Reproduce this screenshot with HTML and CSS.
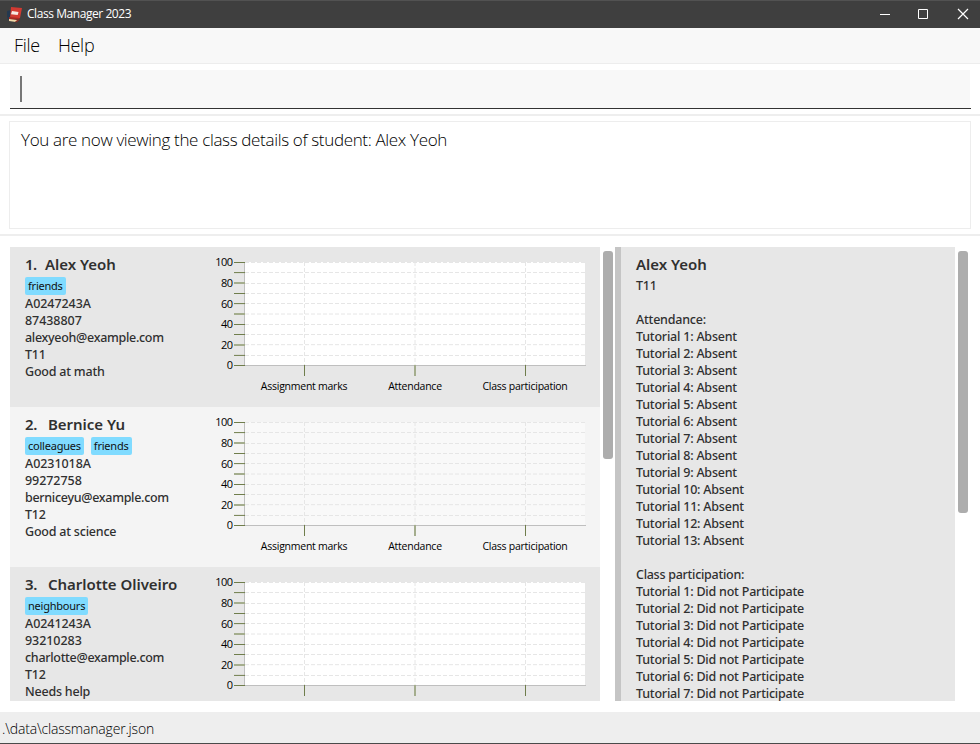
FILE: index.html
```
<!DOCTYPE html>
<html lang="en">
<head>
<meta charset="utf-8">
<title>Class Manager 2023</title>
<link rel="stylesheet" href="styles.css">
</head>
<body>
<svg class="defs" width="0" height="0" aria-hidden="true">
  <symbol id="plot" viewBox="0 0 390 160">
    <g class="grid">
      <path d="M35 15.5H375M35 25.5H375M35 36.5H375M35 46.5H375M35 56.5H375M35 67H375M35 77.5H375M35 87.5H375M35 97.7H375M35 108.5H375"/>
      <path d="M94.5 15V118M205 15V118M315.5 15V118"/>
    </g>
    <path class="axis" d="M34.5 15V118.5H376"/>
    <path class="tick" d="M24 15.5H35M24 46.5H35M24 87.5H35M24 118.5H35M94.5 118V129M315.5 118V129M24 25.6H35M24 56.6H35M24 77.5H35M24 108.4H35"/>
    <path class="tick soft" d="M24 36H35M24 67H35M24 98H35M205 118V129"/>
  </symbol>
</svg>
<div class="window">
  <header class="titlebar">
    <svg class="app-icon" width="16" height="16" viewBox="0 0 16 16">
      <path fill="#24384f" d="M0 4l4-1 1 8-4 2-1-4z"/>
      <path fill="#d23a32" d="M4 0l11 1-2 10-10 0z"/>
      <path fill="#f7e9e4" d="M5 4l6.500 1-.8 3-6.700-.8z"/>
      <path fill="#a92822" d="M2 10l11 1-1 1.500-10 .2z"/>
      <path fill="#f2d9a8" d="M2 12l9.500 1.200L9 15l-7-1z"/>
      <path fill="#8a2a22" d="M8 14.600l4-2.600 1 .6-3.500 3z"/>
    </svg>
    <span class="app-title">Class Manager 2023</span>
    <svg class="controls" width="100" height="28" viewBox="0 0 100 28" fill="none" stroke="#fff">
      <path d="M0 14.500H10M38.500 9.500h9v9h-9z"/>
      <path stroke-width="1.200" d="M78 9l10 10M88 9l-10 10"/>
    </svg>
  </header>
  <nav class="menu"><span>File</span><span class="help">Help</span></nav>
  <section class="command"><div class="field"><i class="caret"></i></div></section>
  <section class="result"><div class="message">You are now viewing the class details of student: Alex Yeoh</div></section>
  <main class="content">
    <div class="students">
      <article class="card">
        <div class="info">
          <h2><span class="no first">1.</span>Alex Yeoh</h2>
          <div class="tags"><span>friends</span></div>
          <p class="num">A0247243A</p><p class="num">87438807</p><p class="mail">alexyeoh@example.com</p><p>T11</p><p>Good at math</p>
        </div>
        <svg class="chart" width="390" height="160"><use href="#plot"/>
          <g class="y"><text x="22.500" y="19">100</text><text x="22.500" y="40">80</text><text x="22.500" y="61">60</text><text x="22.500" y="81">40</text><text x="22.500" y="102">20</text><text x="22.500" y="122">0</text></g>
          <g class="x"><text x="94" y="143">Assignment marks</text><text x="205" y="143">Attendance</text><text x="315" y="143">Class participation</text></g>
        </svg>
      </article>
      <article class="card alt">
        <div class="info">
          <h2><span class="no">2.</span>Bernice Yu</h2>
          <div class="tags"><span>colleagues</span><span>friends</span></div>
          <p class="num">A0231018A</p><p class="num">99272758</p><p class="mail">berniceyu@example.com</p><p>T12</p><p>Good at science</p>
        </div>
        <svg class="chart" width="390" height="160"><use href="#plot"/>
          <g class="y"><text x="22.500" y="19">100</text><text x="22.500" y="40">80</text><text x="22.500" y="61">60</text><text x="22.500" y="81">40</text><text x="22.500" y="102">20</text><text x="22.500" y="122">0</text></g>
          <g class="x"><text x="94" y="143">Assignment marks</text><text x="205" y="143">Attendance</text><text x="315" y="143">Class participation</text></g>
        </svg>
      </article>
      <article class="card">
        <div class="info">
          <h2><span class="no">3.</span>Charlotte Oliveiro</h2>
          <div class="tags"><span>neighbours</span></div>
          <p class="num">A0241243A</p><p class="num">93210283</p><p class="mail">charlotte@example.com</p><p>T12</p><p>Needs help</p>
        </div>
        <svg class="chart" width="390" height="134"><use href="#plot" width="390" height="160"/>
          <g class="y"><text x="22.500" y="19">100</text><text x="22.500" y="40">80</text><text x="22.500" y="61">60</text><text x="22.500" y="81">40</text><text x="22.500" y="102">20</text><text x="22.500" y="122">0</text></g>
        </svg>
      </article>
    </div>
    <div class="bar"><i class="thumb"></i></div>
    <aside class="details">
      <h2>Alex Yeoh</h2>
      <p class="class-id">T11</p>
      <p>Attendance:</p>
      <p>Tutorial 1: Absent</p><p>Tutorial 2: Absent</p><p>Tutorial 3: Absent</p><p>Tutorial 4: Absent</p><p>Tutorial 5: Absent</p><p>Tutorial 6: Absent</p><p>Tutorial 7: Absent</p><p>Tutorial 8: Absent</p><p>Tutorial 9: Absent</p><p>Tutorial 10: Absent</p><p>Tutorial 11: Absent</p><p>Tutorial 12: Absent</p><p class="last">Tutorial 13: Absent</p>
      <p class="heading">Class participation:</p>
      <p>Tutorial 1: Did not Participate</p><p>Tutorial 2: Did not Participate</p><p>Tutorial 3: Did not Participate</p><p>Tutorial 4: Did not Participate</p><p>Tutorial 5: Did not Participate</p><p>Tutorial 6: Did not Participate</p><p>Tutorial 7: Did not Participate</p>
    </aside>
    <div class="bar"><i class="thumb long"></i></div>
  </main>
  <footer class="status">.\data\classmanager.json</footer>
</div>
</body>
</html>
```
FILE: styles.css
```
* { box-sizing: border-box; margin: 0; padding: 0; }
body { font-family: "Noto Sans", "Open Sans", sans-serif; background: #fff; overflow: hidden; }
.defs { position: absolute; }
.window { width: 980px; height: 744px; display: flex; flex-direction: column; }

.titlebar { height: 28px; flex: none; display: flex; align-items: center; background: #3f3f3f; border-top: 1px solid #525252; padding-left: 7px; color: #fff; }
.app-icon { margin-right: 4px; }
.app-title { font: 400 12px/24px "Open Sans", sans-serif; letter-spacing: -0.44px; margin-top: -2px; }
.controls { margin-left: auto; margin-top: -1px; }

.menu { height: 36px; flex: none; background: #f8f8f8; border-bottom: 1px solid #ededed; padding-left: 14px; font: 300 18px/35px "Open Sans", sans-serif; letter-spacing: -0.3px; color: #000; display: flex; }
.help { margin-left: 18px; }

.command { height: 52px; flex: none; padding: 6px 9px 5px 10px; border-bottom: 2px solid #eee; }
.field { height: 39px; background: linear-gradient(#f8f8f8, #f8f8f8) 0 0 / 960px 38px no-repeat; border-bottom: 1px solid #333; padding: 6px 10px; display: flex; }
.caret { width: 2px; height: 26px; background: #777; }

.result { height: 120px; flex: none; padding: 5px 9px; border-bottom: 2px solid #eee; }
.message { height: 108px; border: 1px solid #ededed; padding: 6px 11px; font: 300 17px/24px "Open Sans", sans-serif; letter-spacing: -0.34px; color: #000; }

.content { height: 476px; flex: none; display: flex; padding: 11px 10px; }
.students { width: 590px; height: 454px; overflow: hidden; }
.card { height: 160px; display: flex; background: #e7e7e7; padding-left: 15px; color: #303030; }
.card.alt { background: #f4f4f4; }
.info { width: 185px; flex: none; padding-top: 7px; }
h2 { font-size: 15px; line-height: 20px; font-weight: 600; color: #303030; white-space: nowrap; letter-spacing: -0.03px; }
.no { display: inline-block; width: 23px; letter-spacing: -0.3px; }
.no.first { width: 20px; letter-spacing: -0.7px; }
.tags { display: flex; gap: 7px; padding-top: 3px; height: 21px; }
.tags span { height: 18px; padding: 0 3px; border-radius: 2px; background: #80dbff; font-size: 11px; line-height: 17px; letter-spacing: -0.22px; color: #111; }
p { font-size: 12.5px; font-weight: 500; line-height: 17px; letter-spacing: -0.21px; color: #303030; white-space: nowrap; }
.num { letter-spacing: -0.06px; }
.mail { letter-spacing: -0.3px; }

.chart { flex: none; background: linear-gradient(#fff, #fff) 35px 15px / 340px 103px no-repeat; }
.alt .chart { background-image: linear-gradient(#f9f9f9, #f9f9f9); }
.chart text { font: 400 10.5px "Open Sans", sans-serif; letter-spacing: -0.25px; fill: #000; }
.y text { text-anchor: end; font-size: 11px; letter-spacing: -0.5px; }
.x text { text-anchor: middle; }
.grid { stroke: #e6e6e6; stroke-width: 1; stroke-dasharray: 4 2; }
.axis { stroke: #bfbfbf; fill: none; }
.tick { stroke: #6f7d4b; }
.soft { stroke: #a4ad8d; stroke-width: 2; }

.bar { width: 15px; flex: none; padding: 4px 3px 0; }
.thumb { display: block; width: 10px; height: 208px; border-radius: 3px; background: #adadad; }
.thumb.long { height: 262px; }
.details { width: 340px; height: 454px; overflow: hidden; background: #e7e7e7; border-left: 6px solid #c5c5c5; padding: 7px 0 0 15px; }
.class-id { margin: 3px 0 17px; }
.last { margin-bottom: 17px; }
.heading { letter-spacing: -0.28px; }

.status { height: 32px; flex: none; background: #eee; border-bottom: 1px solid #4a4a4a; padding-left: 2px; font: 300 14px/33px "Open Sans", sans-serif; letter-spacing: -0.18px; color: #000; }
```
